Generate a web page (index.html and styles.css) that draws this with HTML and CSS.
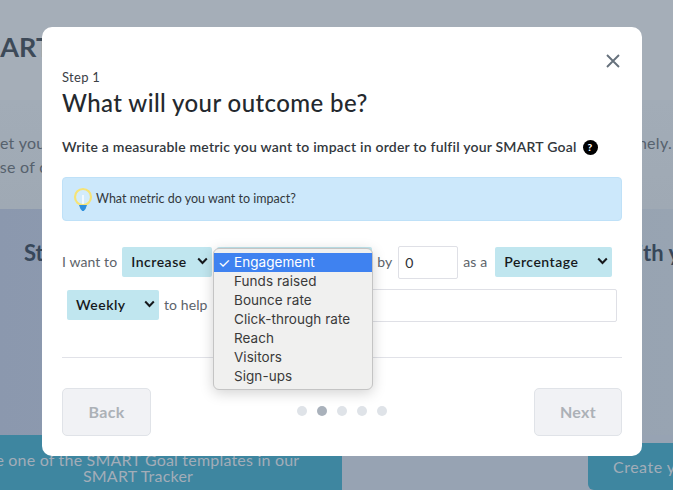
FILE: index.html
```html
<!DOCTYPE html>
<html lang="en">
<head>
    <meta charset="UTF-8">
    <meta name="viewport" content="width=device-width, initial-scale=1.0">
    <title>SMART Goal</title>
    <link rel="stylesheet" href="styles.css">
</head>
<body>
    <!-- Page behind the dialog, already dimmed -->
    <div class="page">
        <header class="page-head">
            <h1>SMART Goals</h1>
        </header>
        <section class="page-intro">
            <div class="intro-line">
                <span class="intro-first">Set your</span>
                <span class="intro-last">timely.</span>
            </div>
            <div class="intro-line">
                <span class="intro-second">Use of our</span>
            </div>
        </section>
        <section class="page-steps">
            <h2>Start</h2>
            <h2>with your</h2>
        </section>
        <div class="page-actions">
            <a class="cta cta-left">Use one of the SMART Goal templates in our SMART Tracker</a>
            <a class="cta cta-right">Create your own</a>
        </div>
    </div>

    <div class="modal">
        <button class="close-btn" type="button" aria-label="Close">
            <svg width="16" height="16" viewBox="0 0 16 16"><path d="M2 2 L14 14 M14 2 L2 14" stroke="#66717c" stroke-width="1.9" fill="none"/></svg>
        </button>

        <div class="step-label">Step 1</div>
        <h3 class="modal-title">What will your outcome be?</h3>

        <p class="modal-desc">
            Write a measurable metric you want to impact in order to fulfil your SMART Goal
            <span class="help-dot">?</span>
        </p>

        <div class="hint">
            <svg class="bulb" width="20" height="26" viewBox="0 0 20 26">
                <circle cx="10" cy="10" r="8" fill="#d3ecfb" stroke="#f6e376" stroke-width="2.2"/>
                <path d="M10 8 V17" stroke="#ffffff" stroke-width="1.4" fill="none"/>
                <path d="M6 18 H14 L12.5 22 L10.8 24 H9.2 L7.5 22 Z" fill="#2e8fdc"/>
            </svg>
            <span>What metric do you want to impact?</span>
        </div>

        <div class="form-row">
            <span>I want to</span>
            <div class="select select-verb">Increase <svg class="chevron" width="11" height="8" viewBox="0 0 11 8"><path d="M1.2 1.5 L5.5 6 L9.8 1.5" stroke="#16191c" stroke-width="2" fill="none"/></svg></div>
            <div class="select select-metric"></div>
            <span>by</span>
            <div class="field field-amount">0</div>
            <span>as a</span>
            <div class="select select-unit">Percentage <svg class="chevron" width="11" height="8" viewBox="0 0 11 8"><path d="M1.2 1.5 L5.5 6 L9.8 1.5" stroke="#16191c" stroke-width="2" fill="none"/></svg></div>
        </div>

        <div class="form-row form-row-second">
            <div class="select select-freq">Weekly <svg class="chevron" width="11" height="8" viewBox="0 0 11 8"><path d="M1.2 1.5 L5.5 6 L9.8 1.5" stroke="#16191c" stroke-width="2" fill="none"/></svg></div>
            <span>to help</span>
            <div class="field field-goal"></div>
        </div>

        <hr class="divider">

        <div class="modal-foot">
            <button class="nav-btn" type="button" disabled>Back</button>
            <div class="dots">
                <span class="dot"></span>
                <span class="dot dot-active"></span>
                <span class="dot"></span>
                <span class="dot"></span>
                <span class="dot"></span>
            </div>
            <button class="nav-btn nav-next" type="button" disabled>Next</button>
        </div>

        <!-- Open native select menu -->
        <ul class="menu">
            <li class="menu-item menu-item-on"><span class="tick">✓</span>Engagement</li>
            <li class="menu-item">Funds raised</li>
            <li class="menu-item">Bounce rate</li>
            <li class="menu-item">Click-through rate</li>
            <li class="menu-item">Reach</li>
            <li class="menu-item">Visitors</li>
            <li class="menu-item">Sign-ups</li>
        </ul>
    </div>
</body>
</html>
```

FILE: styles.css
```css
* {
    box-sizing: border-box;
}
html, body {
    height: 100%;
}
body {
    margin: 0;
    overflow: hidden;
    font-family: Lato, "Liberation Sans", sans-serif;
    color: #2b3036;
    background-color: #98a3b3;
}

/* dimmed page */
.page {
    height: 490px;
    display: flex;
    flex-direction: column;
    overflow: hidden;
}
.page-head {
    height: 100px;
    padding: 31px 0 0 0;
    background: #a5aeb8;
}
.page-head h1 {
    margin: 0 0 0 -40px;
    font-size: 27px;
    line-height: 32px;
    font-weight: 700;
    color: #3d4a58;
    white-space: nowrap;
}
.page-intro {
    height: 109px;
    padding-top: 31px;
    font-size: 16px;
    line-height: 24px;
    letter-spacing: 0.3px;
    color: #56616d;
    background: linear-gradient(#a2acb7, #9fa9b4);
}
.intro-line {
    display: flex;
    justify-content: space-between;
    white-space: nowrap;
}
.intro-first {
    margin-left: -9px;
}
.intro-second {
    margin-left: -12px;
}
.intro-last {
    margin-right: 1px;
}
.page-steps {
    height: 226px;
    display: flex;
    justify-content: space-between;
    white-space: nowrap;
    background: linear-gradient(90deg, #8b98ae, #98a4b2);
}
.page-steps h2 {
    margin: 31px 0 0 24px;
    font-size: 22px;
    line-height: 26px;
    font-weight: 700;
    color: #37475a;
}
.page-steps h2:last-child {
    margin: 31px -40px 0 0;
}
.page-actions {
    height: 55px;
    display: flex;
    justify-content: space-between;
    background: #97a3b3;
}
.cta {
    background: #3e86a0;
    color: #a3adb8;
    font-size: 16px;
    text-align: center;
}
.cta-left {
    width: 408px;
    margin-left: -66px;
    padding: 17px 40px 0;
    line-height: 16px;
    letter-spacing: 0.2px;
}
.cta-right {
    width: 120px;
    margin-top: 8px;
    margin-right: -35px;
    padding: 14px 0 0 25px;
    line-height: 20px;
    letter-spacing: 0.5px;
    border-radius: 0 0 0 6px;
    white-space: nowrap;
    text-align: left;
    overflow: hidden;
}

/* dialog */
.modal {
    position: absolute;
    left: 42px;
    top: 27px;
    width: 600px;
    height: 429px;
    padding: 41px 20px 20px;
    background: white;
    border-radius: 10px;
}
.close-btn {
    position: absolute;
    top: 26px;
    right: 21px;
    width: 16px;
    height: 16px;
    padding: 0;
    border: none;
    background: none;
}
.close-btn svg {
    display: block;
}
.step-label {
    font-size: 13px;
    line-height: 18px;
    letter-spacing: 0.3px;
    color: #3b4046;
}
.modal-title {
    margin: 2px 0 0 0;
    font-size: 24px;
    line-height: 30px;
    font-weight: 500;
    letter-spacing: 0.4px;
    color: #24292e;
}
.modal-desc {
    margin: 19px 0 0 0;
    font-size: 14px;
    line-height: 20px;
    font-weight: 600;
    letter-spacing: 0.21px;
    color: #33383d;
    display: flex;
    align-items: center;
    gap: 6px;
    white-space: nowrap;
}
.help-dot {
    width: 15px;
    height: 15px;
    border-radius: 50%;
    background: black;
    color: white;
    font-size: 10px;
    line-height: 15px;
    font-weight: 900;
    text-align: center;
    margin-top: 1px;
}
.hint {
    margin-top: 20px;
    height: 44px;
    display: flex;
    align-items: center;
    gap: 3px;
    padding-left: 10px;
    background: #cce8fb;
    border: 1px solid #bfe1f8;
    border-radius: 4px;
    font-size: 12.5px;
    color: #33383d;
}
.hint span {
    margin-bottom: 2px;
}
.bulb {
    display: block;
    margin-top: 2px;
}
.form-row {
    display: flex;
    align-items: center;
    gap: 5px;
    height: 33px;
    margin-top: 25px;
    font-size: 14px;
    letter-spacing: 0.1px;
    color: #5c636a;
    white-space: nowrap;
}
.form-row span {
    margin-bottom: 2px;
}
.form-row-second {
    margin-top: 10px;
    padding-left: 5px;
}
.select {
    height: 30px;
    margin-bottom: 1px;
    display: flex;
    align-items: center;
    justify-content: space-between;
    padding: 0 4px 2px 9px;
    background: #c0e6ef;
    border-radius: 2px;
    font-size: 14px;
    font-weight: 600;
    letter-spacing: 0.5px;
    color: #16191c;
}
.select-verb {
    width: 90px;
}
.select-metric {
    width: 155px;
}
.select-unit {
    width: 117px;
    margin-left: 3px;
}
.select-freq {
    width: 92px;
}
.field {
    height: 33px;
    padding: 0 6px;
    line-height: 31px;
    background: white;
    border: 1px solid #dfe0e6;
    border-radius: 2px;
    font-size: 14px;
    color: #2b3036;
}
.field-amount {
    width: 60px;
    margin-left: 1px;
}
.field-goal {
    flex: 1;
    margin-right: 5px;
}
.divider {
    margin: 35px 0 0 0;
    border: none;
    border-top: 1px solid #e1e2e8;
}
.modal-foot {
    margin-top: 30px;
    display: flex;
    align-items: flex-start;
    justify-content: space-between;
}
.nav-btn {
    width: 89px;
    height: 48px;
    padding: 0 0 2px;
    background: #f1f2f5;
    border: 1px solid #e0e3e8;
    border-radius: 5px;
    font-family: Lato, "Liberation Sans", sans-serif;
    font-size: 16px;
    font-weight: 700;
    letter-spacing: 0.3px;
    color: #acb1b7;
}
.nav-next {
    width: 88px;
}
.dots {
    display: flex;
    gap: 10px;
    margin: 18px 0 0 -1px;
}
.dot {
    width: 10px;
    height: 10px;
    border-radius: 50%;
    background: #dfe3e8;
}
.dot-active {
    background: #a9b1bb;
}

/* native menu */
.menu {
    position: absolute;
    left: 171px;
    top: 221px;
    width: 160px;
    height: 142px;
    margin: 0;
    padding: 4px 0;
    list-style: none;
    background: #f0f0ef;
    border: 1px solid #c4c4c4;
    border-radius: 6px;
    box-shadow: 0 3px 14px rgba(0, 0, 0, 0.18);
    font-family: Inter, "Liberation Sans", sans-serif;
    font-size: 13.5px;
    letter-spacing: 0.05px;
    color: #3a3a3a;
}
.menu-item {
    position: relative;
    height: 19px;
    line-height: 19px;
    padding-left: 20px;
    white-space: nowrap;
}
.menu-item-on {
    background: #3f82f0;
    color: white;
}
.tick {
    position: absolute;
    left: 4px;
    font-size: 14px;
}
```
